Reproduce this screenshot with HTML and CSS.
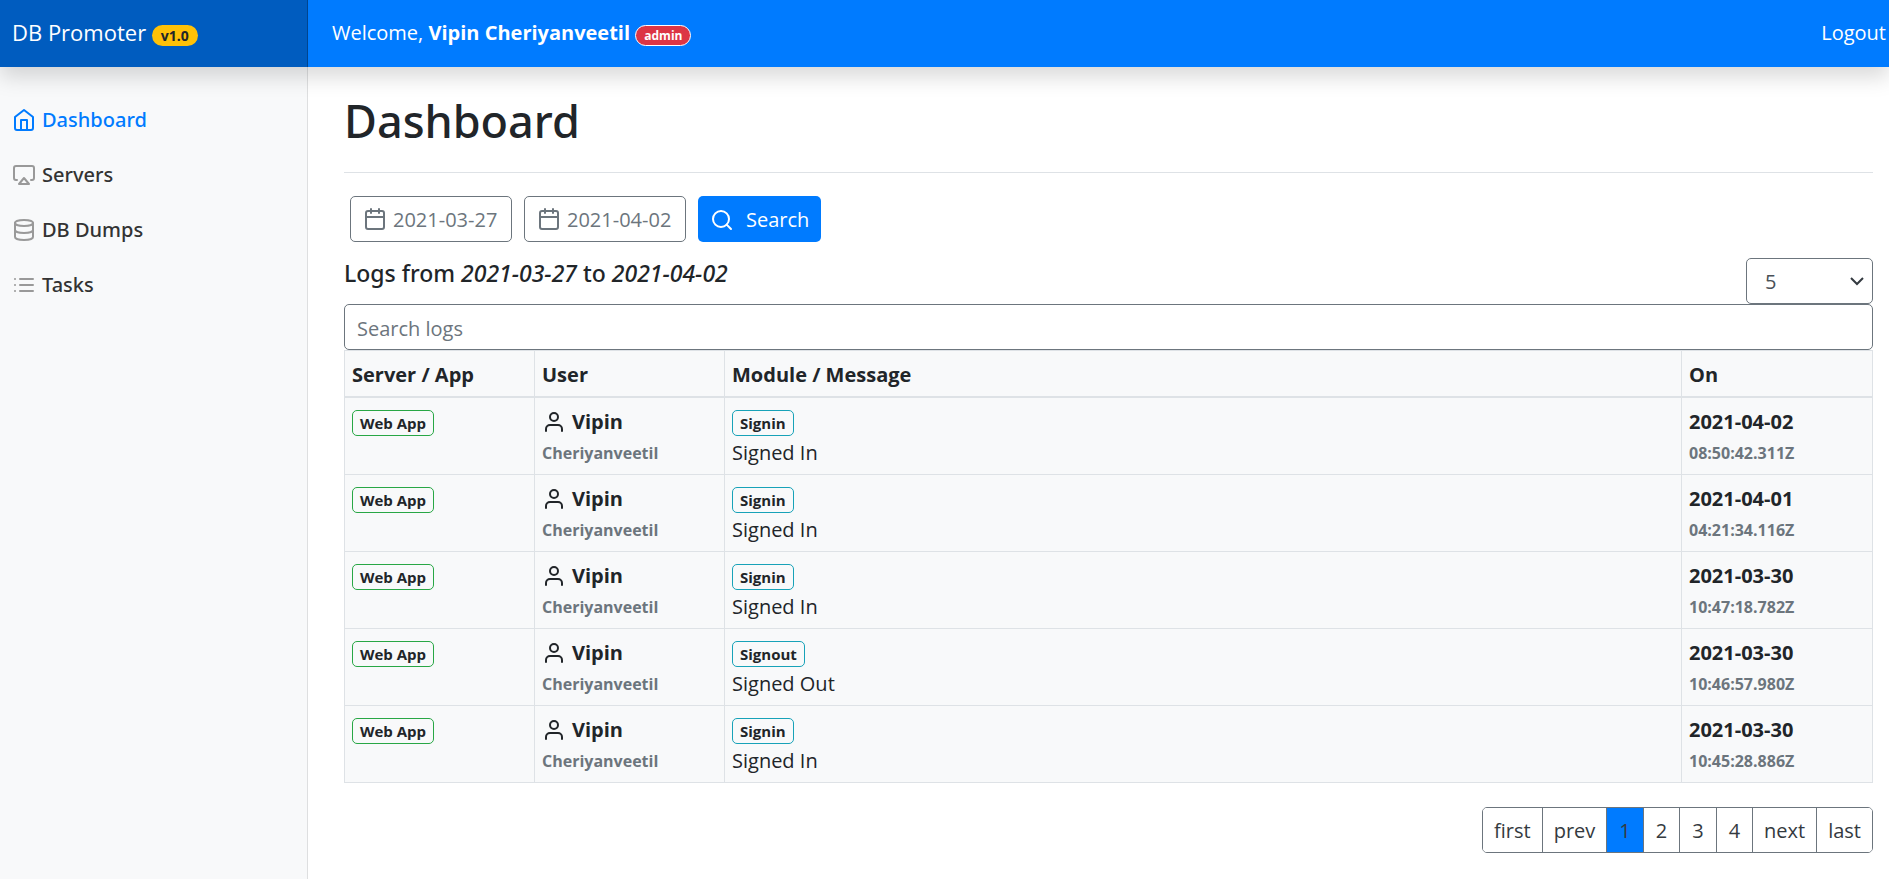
FILE: index.html
```html
<!DOCTYPE html>
<html lang="en">
<head>
	<meta charset="utf-8">
	<meta name="viewport" content="width=device-width, initial-scale=1">
	<title>DB Promoter</title>
	<link rel="stylesheet" href="styles.css">
</head>
<body>
	<svg class="sprite" aria-hidden="true">
		<symbol id="home" viewBox="0 0 24 24"><path d="M3 9l9-7 9 7v11a2 2 0 0 1-2 2H5a2 2 0 0 1-2-2z"/><polyline points="9 22 9 12 15 12 15 22"/></symbol>
		<symbol id="airplay" viewBox="0 0 24 24"><path d="M5 17H4a2 2 0 0 1-2-2V5a2 2 0 0 1 2-2h16a2 2 0 0 1 2 2v10a2 2 0 0 1-2 2h-1"/><polygon points="12 15 17 21 7 21 12 15"/></symbol>
		<symbol id="database" viewBox="0 0 24 24"><ellipse cx="12" cy="5" rx="9" ry="3"/><path d="M21 12c0 1.66-4 3-9 3s-9-1.34-9-3"/><path d="M3 5v14c0 1.66 4 3 9 3s9-1.34 9-3V5"/></symbol>
		<symbol id="list" viewBox="0 0 24 24"><path d="M8 6h13M8 12h13M8 18h13M3 6h.01M3 12h.01M3 18h.01"/></symbol>
		<symbol id="calendar" viewBox="0 0 24 24"><rect x="3" y="4" width="18" height="18" rx="2" ry="2"/><path d="M16 2v4M8 2v4M3 10h18"/></symbol>
		<symbol id="search" viewBox="0 0 24 24"><circle cx="11" cy="11" r="8"/><path d="M21 21l-4.35-4.35"/></symbol>
		<symbol id="user" viewBox="0 0 24 24"><path d="M20 21v-2a4 4 0 0 0-4-4H8a4 4 0 0 0-4 4v2"/><circle cx="12" cy="7" r="4"/></symbol>
		<symbol id="chevron" viewBox="0 0 16 16"><path d="M2 5l6 6 6-6"/></symbol>
	</svg>

	<header class="navbar">
		<a class="brand" href="#">DB Promoter <span class="pill pill-warning">v1.0</span></a>
		<div class="welcome">Welcome, <strong>Vipin Cheriyanveetil</strong> <span class="pill pill-danger">admin</span></div>
		<a class="logout" href="#">Logout</a>
	</header>

	<div class="layout">
		<nav class="sidebar">
			<a class="nav-link active" href="#"><svg class="icon"><use href="#home"/></svg>Dashboard</a>
			<a class="nav-link" href="#"><svg class="icon"><use href="#airplay"/></svg>Servers</a>
			<a class="nav-link" href="#"><svg class="icon"><use href="#database"/></svg>DB Dumps</a>
			<a class="nav-link" href="#"><svg class="icon"><use href="#list"/></svg>Tasks</a>
		</nav>

		<main class="content">
			<h1>Dashboard</h1>

			<form class="filters">
				<label class="date-field"><svg class="icon"><use href="#calendar"/></svg><input type="text" value="2021-03-27" aria-label="From date"></label>
				<label class="date-field"><svg class="icon"><use href="#calendar"/></svg><input type="text" value="2021-04-02" aria-label="To date"></label>
				<button class="btn-search" type="button"><svg class="icon"><use href="#search"/></svg>Search</button>
			</form>

			<div class="logs-head">
				<h2>Logs from <em>2021-03-27</em> to <em>2021-04-02</em></h2>
				<div class="page-size">
					<select aria-label="Logs per page">
						<option>5</option>
						<option>10</option>
						<option>25</option>
					</select>
					<svg class="chevron"><use href="#chevron"/></svg>
				</div>
			</div>

			<input class="search-logs" type="text" placeholder="Search logs" aria-label="Search logs">

			<table class="logs">
				<thead>
					<tr>
						<th class="col-side">Server / App</th>
						<th class="col-side">User</th>
						<th>Module / Message</th>
						<th class="col-on">On</th>
					</tr>
				</thead>
				<tbody>
					<tr>
						<td><span class="tag tag-app">Web App</span></td>
						<td><div class="name"><svg class="icon"><use href="#user"/></svg>Vipin</div><div class="sub">Cheriyanveetil</div></td>
						<td><span class="tag tag-module">Signin</span><div class="message">Signed In</div></td>
						<td><div class="name">2021-04-02</div><div class="sub">08:50:42.311Z</div></td>
					</tr>
					<tr>
						<td><span class="tag tag-app">Web App</span></td>
						<td><div class="name"><svg class="icon"><use href="#user"/></svg>Vipin</div><div class="sub">Cheriyanveetil</div></td>
						<td><span class="tag tag-module">Signin</span><div class="message">Signed In</div></td>
						<td><div class="name">2021-04-01</div><div class="sub">04:21:34.116Z</div></td>
					</tr>
					<tr>
						<td><span class="tag tag-app">Web App</span></td>
						<td><div class="name"><svg class="icon"><use href="#user"/></svg>Vipin</div><div class="sub">Cheriyanveetil</div></td>
						<td><span class="tag tag-module">Signin</span><div class="message">Signed In</div></td>
						<td><div class="name">2021-03-30</div><div class="sub">10:47:18.782Z</div></td>
					</tr>
					<tr>
						<td><span class="tag tag-app">Web App</span></td>
						<td><div class="name"><svg class="icon"><use href="#user"/></svg>Vipin</div><div class="sub">Cheriyanveetil</div></td>
						<td><span class="tag tag-module">Signout</span><div class="message">Signed Out</div></td>
						<td><div class="name">2021-03-30</div><div class="sub">10:46:57.980Z</div></td>
					</tr>
					<tr>
						<td><span class="tag tag-app">Web App</span></td>
						<td><div class="name"><svg class="icon"><use href="#user"/></svg>Vipin</div><div class="sub">Cheriyanveetil</div></td>
						<td><span class="tag tag-module">Signin</span><div class="message">Signed In</div></td>
						<td><div class="name">2021-03-30</div><div class="sub">10:45:28.886Z</div></td>
					</tr>
				</tbody>
			</table>

			<div class="pagination">
				<button type="button">first</button>
				<button type="button">prev</button>
				<button type="button" class="page current">1</button>
				<button type="button" class="page">2</button>
				<button type="button" class="page">3</button>
				<button type="button" class="page">4</button>
				<button type="button">next</button>
				<button type="button">last</button>
			</div>
		</main>
	</div>
</body>
</html>
```

FILE: styles.css
```css
* {
	box-sizing: border-box;
}
body {
	margin: 0;
	min-height: 100vh;
	display: flex;
	flex-direction: column;
	font-family: "Open Sans", "Noto Sans", sans-serif;
	font-size: 20px;
	line-height: 30px;
	color: #212529;
	background-color: #fff;
}
a {
	text-decoration: none;
}
button, input, select {
	font: inherit;
	color: inherit;
	margin: 0;
}
.sprite {
	display: none;
}
.icon {
	width: 24px;
	height: 24px;
	flex: none;
	fill: none;
	stroke: currentColor;
	stroke-width: 2;
	stroke-linecap: round;
	stroke-linejoin: round;
}

/* top bar */
.navbar {
	position: relative;
	z-index: 1;
	display: flex;
	align-items: stretch;
	height: 67px;
	line-height: 65px;
	color: #fff;
	background-color: #007bff;
	box-shadow: 0 10px 20px rgba(0, 0, 0, 0.15);
}
.navbar a {
	color: #fff;
}
.brand {
	width: 308px;
	flex: none;
	padding-left: 12px;
	font-size: 22px;
	background-color: rgba(0, 0, 0, 0.25);
	box-shadow: inset -1px 0 0 rgba(0, 0, 0, 0.25);
}
.welcome {
	flex: 1;
	padding-left: 24px;
}
.logout {
	padding-right: 3px;
}
.pill {
	display: inline-block;
	padding: 0 9px;
	border-radius: 11px;
	font-size: 14px;
	font-weight: 700;
	line-height: 21px;
}
.pill-warning {
	color: #212529;
	background-color: #ffc107;
}
.pill-danger {
	padding: 0 8px;
	border: 1px solid #fff;
	font-size: 12px;
	line-height: 19px;
	background-color: #dc3545;
}

/* sidebar */
.layout {
	flex: 1;
	display: flex;
}
.sidebar {
	width: 308px;
	flex: none;
	padding-top: 25px;
	background-color: #f8f9fa;
	box-shadow: inset -1px 0 0 rgba(0, 0, 0, 0.1);
}
.nav-link {
	display: flex;
	align-items: center;
	gap: 6px;
	height: 55px;
	padding-left: 12px;
	font-family: "Noto Sans", sans-serif;
	font-weight: 500;
	color: #333;
}
.nav-link .icon {
	color: #999;
}
.nav-link.active,
.nav-link.active .icon {
	color: #007bff;
}

/* content */
.content {
	flex: 1;
	min-width: 0;
	padding: 24px 16px 24px 36px;
}
h1 {
	margin: 0 0 23px;
	padding-bottom: 22px;
	border-bottom: 1px solid #dee2e6;
	font-family: "Noto Sans", sans-serif;
	font-size: 45px;
	font-weight: 500;
	line-height: 59px;
}
.filters {
	display: flex;
	gap: 12px;
	padding-left: 6px;
}
.date-field {
	display: flex;
	align-items: center;
	gap: 6px;
	height: 46px;
	padding: 0 12px;
	border: 1px solid #6c757d;
	border-radius: 5px;
	color: #6c757d;
}
.date-field input {
	width: 106px;
	padding: 2px 0 0;
	border: 0;
	background: none;
	outline: none;
}
.btn-search {
	display: flex;
	align-items: center;
	gap: 12px;
	height: 46px;
	padding: 2px 12px 0;
	border: 0;
	border-radius: 5px;
	color: #fff;
	background-color: #007bff;
	cursor: pointer;
}
.logs-head {
	display: flex;
	justify-content: space-between;
	margin-top: 16px;
}
h2 {
	margin: 0;
	font-family: "Noto Sans", sans-serif;
	font-size: 23px;
	font-weight: 500;
	line-height: 30px;
}
.page-size {
	position: relative;
	width: 127px;
}
.page-size select {
	appearance: none;
	width: 100%;
	height: 46px;
	padding: 2px 18px 0;
	border: 1px solid #6c757d;
	border-radius: 5px;
	color: #495057;
	background-color: #fff;
}
.chevron {
	position: absolute;
	top: 15px;
	right: 8px;
	width: 16px;
	height: 16px;
	fill: none;
	stroke: #343a40;
	stroke-width: 2;
	pointer-events: none;
}
.search-logs {
	display: block;
	width: 100%;
	height: 46px;
	padding: 2px 12px 0;
	border: 1px solid #6c757d;
	border-radius: 5px;
}
.search-logs::placeholder {
	color: #6c757d;
}

/* logs table */
.logs {
	width: 100%;
	table-layout: fixed;
	border-collapse: collapse;
	background-color: #f8f9fa;
}
.logs th,
.logs td {
	padding: 8px 7px 6px;
	border: 1px solid #dee2e6;
	text-align: left;
	vertical-align: top;
}
.logs th {
	padding-top: 9px;
	border-bottom-width: 2px;
}
.col-side {
	width: 190px;
}
.col-on {
	width: 191px;
}
.name {
	display: flex;
	align-items: center;
	gap: 6px;
	height: 32px;
	font-weight: 700;
}
.sub {
	font-size: 16px;
	font-weight: 700;
	color: #6c757d;
}
.tag {
	display: block;
	width: fit-content;
	margin: 4px 0 2px;
	padding: 0 7px;
	border: 1px solid;
	border-radius: 5px;
	font-size: 15px;
	font-weight: 700;
	line-height: 24px;
}
.tag-app {
	border-color: #28a745;
}
.tag-module {
	border-color: #17a2b8;
}

/* pager */
.pagination {
	display: flex;
	width: fit-content;
	margin: 24px 0 0 auto;
	border: 1px solid #6c757d;
	border-radius: 5px;
	overflow: hidden;
}
.pagination button {
	height: 44px;
	padding: 2px 11px 0;
	border: 0;
	border-left: 1px solid #6c757d;
	color: #343a40;
	background-color: #fff;
	cursor: pointer;
}
.pagination button:first-child {
	border-left: 0;
}
.pagination .page {
	padding: 2px 12px 0;
}
.pagination .current {
	background-color: #007bff;
}
```
